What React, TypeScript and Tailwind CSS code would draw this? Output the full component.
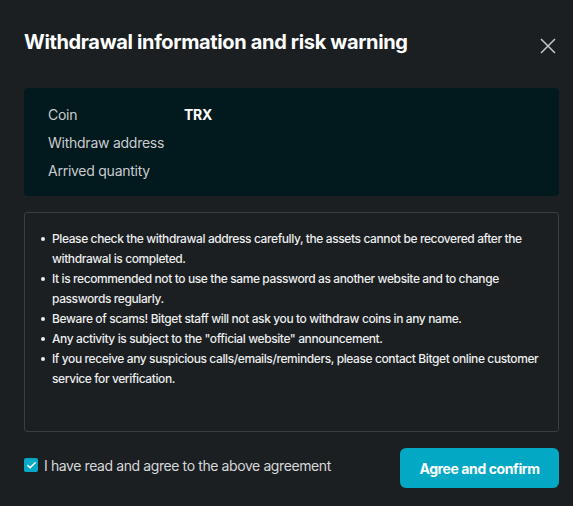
import { Check } from 'lucide-react';

const info = [
  { label: 'Coin', value: 'TRX' },
  { label: 'Withdraw address', value: '' },
  { label: 'Arrived quantity', value: '' },
];

const notices = [
  'Please check the withdrawal address carefully, the assets cannot be recovered after the withdrawal is completed.',
  'It is recommended not to use the same password as another website and to change passwords regularly.',
  'Beware of scams! Bitget staff will not ask you to withdraw coins in any name.',
  'Any activity is subject to the "official website" announcement.',
  'If you receive any suspicious calls/emails/reminders, please contact Bitget online customer service for verification.',
];

export default function App() {
  return (
    <div className="w-[573px] h-[506px] bg-[#1c1f21] pl-6 pr-[14px] font-['Inter',sans-serif] text-white overflow-hidden">
      {/* Header */}
      <div className="flex justify-between items-start pt-7">
        <h2 className="text-[20px] leading-7 font-bold tracking-[-0.35px]">
          Withdrawal information and risk warning
        </h2>
        <button className="mt-[10px] mr-[3px] text-[#c4c7ca]">
          <svg width="16" height="16" viewBox="0 0 16 16" fill="none" stroke="currentColor" strokeWidth="1.5">
            <path d="M1 1L15 15M15 1L1 15" />
          </svg>
        </button>
      </div>

      {/* Summary */}
      <div className="mt-8 bg-[#02191d] rounded px-6 py-4 flex flex-col gap-2">
        {info.map((row) => (
          <div key={row.label} className="flex h-5 items-center text-[14px] tracking-[-0.25px]">
            <span className="w-[136px] text-[#c9ccce]">{row.label}</span>
            <span className="font-bold text-white">{row.value}</span>
          </div>
        ))}
      </div>

      {/* Risk notice */}
      <div className="mt-4 h-[220px] border border-[#3b3e41] rounded-[3px] pt-4 pl-4 pr-3">
        <ul className="text-[12px] leading-5 font-medium text-[#ebedee] tracking-[-0.4px]">
          {notices.map((n) => (
            <li key={n} className="flex">
              <span className="w-[11px] shrink-0 pt-[8px]">
                <span className="block w-[4px] h-[4px] rounded-full bg-[#ebedee]" />
              </span>
              <span>{n}</span>
            </li>
          ))}
        </ul>
      </div>

      {/* Footer */}
      <div className="mt-4 flex justify-between items-center">
        <label className="flex items-center gap-[6px] mb-[6px] text-[14px] text-[#d6d8da] tracking-[-0.4px]">
          <span className="w-[14px] h-[14px] rounded-[2px] bg-[#03a8c5] flex items-center justify-center">
            <Check size={11} strokeWidth={3.5} className="text-white" />
          </span>
          I have read and agree to the above agreement
        </label>
        <button className="w-[159px] h-10 rounded-md bg-[#03a8c5] text-[14px] font-bold tracking-[-0.4px] text-white">
          Agree and confirm
        </button>
      </div>
    </div>
  );
}
